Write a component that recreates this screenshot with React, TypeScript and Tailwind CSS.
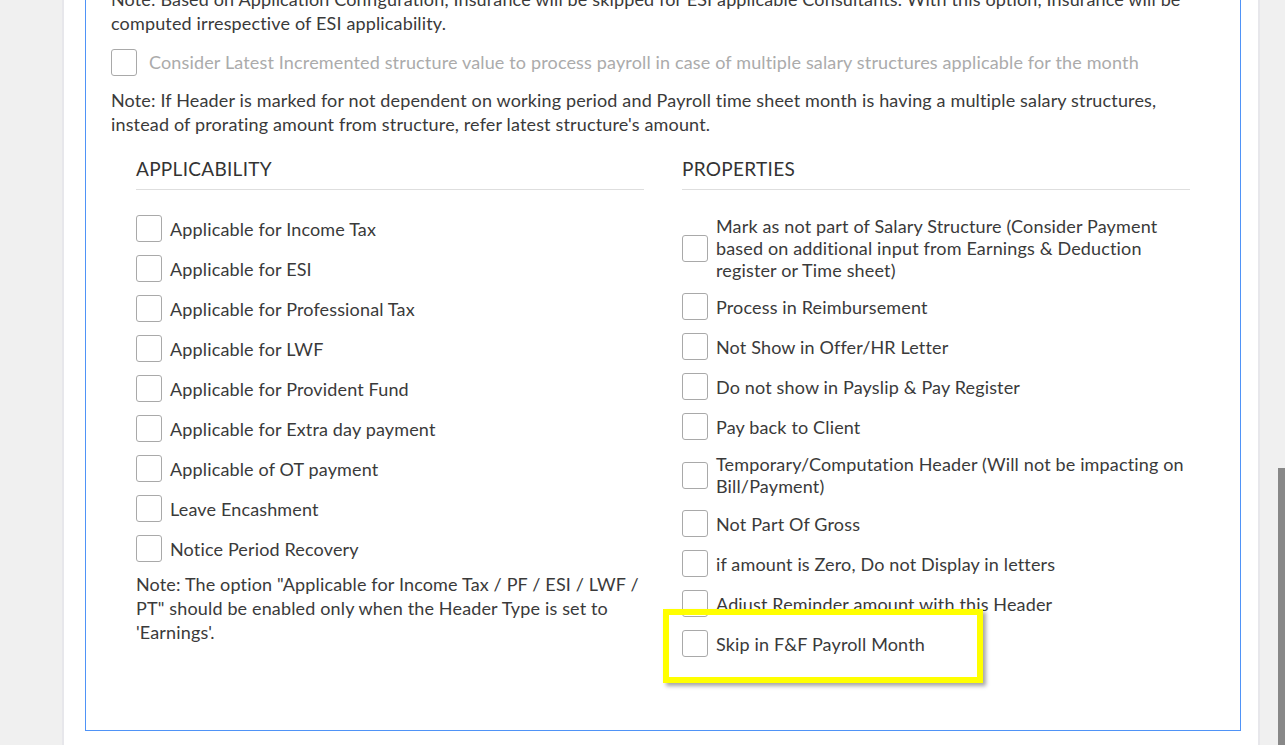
import React from "react";

const applicability: Array<string> = [
  "Applicable for Income Tax",
  "Applicable for ESI",
  "Applicable for Professional Tax",
  "Applicable for LWF",
  "Applicable for Provident Fund",
  "Applicable for Extra day payment",
  "Applicable of OT payment",
  "Leave Encashment",
  "Notice Period Recovery",
];

const properties: Array<string> = [
  "Mark as not part of Salary Structure (Consider Payment based on additional input from Earnings & Deduction register or Time sheet)",
  "Process in Reimbursement",
  "Not Show in Offer/HR Letter",
  "Do not show in Payslip & Pay Register",
  "Pay back to Client",
  "Temporary/Computation Header (Will not be impacting on Bill/Payment)",
  "Not Part Of Gross",
  "if amount is Zero, Do not Display in letters",
  "Adjust Reminder amount with this Header",
];

function Box() {
  return (
    <span className="block w-[26px] h-[27px] shrink-0 rounded-[3px] border border-[#a9a9a9] bg-white" />
  );
}

function CheckRow({ label, tight }: { label: string; tight?: boolean }) {
  return (
    <label
      className={`flex items-center gap-[8px] min-h-[27px] leading-[22px] cursor-pointer ${
        tight ? "mb-[12px]" : "mb-[13px]"
      }`}
    >
      <Box />
      <span>{label}</span>
    </label>
  );
}

function Section({ title, children }: { title: string; children: React.ReactNode }) {
  return (
    <div>
      <h3 className="text-[19px] tracking-[0.3px] leading-[24px] text-[#333] pb-[8px] border-b border-[#dedede] mb-[25px]">
        {title}
      </h3>
      {children}
    </div>
  );
}

export default function App() {
  return (
    <div
      className="flex h-[745px] w-full overflow-hidden bg-[#f0f0f0] text-[18px] tracking-[0.15px] text-[#3a3a3a]"
      style={{ fontFamily: "Lato, 'Open Sans', sans-serif" }}
    >
      <div className="w-[64px] shrink-0 border-r-2 border-[#e7e7eb]" />

      <div className="flex-1 bg-white pl-[21px] pr-[17px]">
        <div className="border border-[#4f93f7] -mt-[34px] pt-[20px] pb-[60px]">
          <div className="px-[25px]">
            <p className="leading-[24px]">
              Note: Based on Application Configuration, Insurance will be skipped for ESI applicable Consultants.
              With this option, Insurance will be computed irrespective of ESI applicability.
            </p>

            <label className="flex items-center gap-[12px] mt-[14px] text-[#ababab]">
              <Box />
              <span>
                Consider Latest Incremented structure value to process payroll in case of multiple salary structures
                applicable for the month
              </span>
            </label>

            <p className="leading-[24px] mt-[12px]">
              Note: If Header is marked for not dependent on working period and Payroll time sheet month is having a
              multiple salary structures, instead of prorating amount from structure, refer latest structure's amount.
            </p>

            <div className="grid grid-cols-2 gap-x-[38px] px-[25px] mt-[21px]">
              <Section title="APPLICABILITY">
                {applicability.map((item) => (
                  <CheckRow key={item} label={item} />
                ))}
                <p className="leading-[24px] -mt-[3px]">
                  Note: The option "Applicable for Income Tax / PF / ESI / LWF / PT" should be enabled only when the
                  Header Type is set to 'Earnings'.
                </p>
              </Section>

              <Section title="PROPERTIES">
                {properties.map((item, i) => (
                  <CheckRow key={item} label={item} tight={i === 0} />
                ))}
                <div className="relative">
                  <CheckRow label="Skip in F&F Payroll Month" />
                  {/* review highlight */}
                  <div className="absolute -left-[19px] -top-[21px] w-[320px] h-[74px] border-[6px] border-[#ffff00] shadow-[3px_3px_4px_rgba(0,0,0,0.35)] pointer-events-none" />
                </div>
              </Section>
            </div>
          </div>
        </div>
      </div>

      <div className="relative w-[27px] shrink-0 border-l-2 border-[#e7e7eb]">
        <div className="absolute right-0 top-[468px] bottom-0 w-[7px] bg-[#888]" />
      </div>
    </div>
  );
}
